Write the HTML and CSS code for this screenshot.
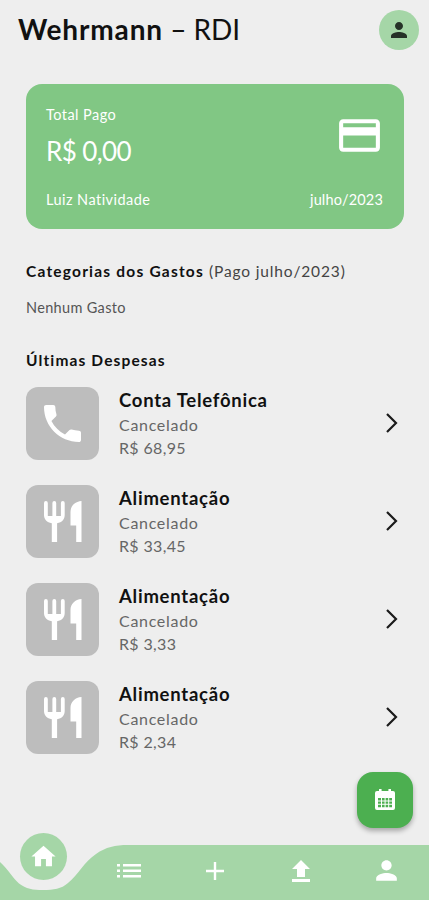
FILE: index.html
```
<!DOCTYPE html>
<html lang="pt-BR">
<head>
    <meta charset="UTF-8">
    <meta name="viewport" content="width=device-width, initial-scale=1.0">
    <title>Wehrmann - RDI</title>
    <link rel="stylesheet" href="styles.css">
</head>
<body>
    <svg width="0" height="0" class="sprite">
        <symbol id="person" viewBox="0 0 24 24"><path d="M12 12c2.21 0 4-1.79 4-4s-1.79-4-4-4-4 1.79-4 4 1.79 4 4 4zm0 2c-2.67 0-8 1.34-8 4v2h16v-2c0-2.66-5.33-4-8-4z"/></symbol>
        <symbol id="food" viewBox="0 0 38 42"><path d="M0 2a1.900 1.900 0 0 1 3.800 0v13h4.600V2a1.900 1.900 0 0 1 3.800 0v13h4.700V2a1.900 1.900 0 0 1 3.800 0v12c0 4.500-2.700 7.300-7.600 8.200V41H7.800V22.200C2.900 21.300 0 18.500 0 14z"/><path d="M37.500 0v41h-5.300V24.500h-5.700V11C26.500 5 31 .5 37.500 0z"/></symbol>
        <symbol id="chevron" viewBox="0 0 14 22"><path d="M2 2l9 9-9 9" fill="none" stroke="#1b1b1b" stroke-width="2.200"/></symbol>
    </svg>

    <div class="app">
        <header class="header">
            <h1><b>Wehrmann</b> <span>– RDI</span></h1>
            <div class="avatar"><svg width="24" height="24"><use href="#person"/></svg></div>
        </header>

        <main class="content">
            <section class="card">
                <div class="card-top">
                    <div>
                        <p class="card-label">Total Pago</p>
                        <p class="card-value">R$ 0,00</p>
                    </div>
                    <svg class="card-icon" viewBox="0 0 24 24"><path d="M20 4H4c-1.110 0-1.990.89-1.990 2L2 18c0 1.110.89 2 2 2h16c1.110 0 2-.89 2-2V6c0-1.110-.89-2-2-2zm0 14H4v-6h16v6zm0-10H4V6h16v2z"/></svg>
                </div>
                <div class="card-bottom">
                    <span class="owner">Luiz Natividade</span>
                    <span class="month">julho/2023</span>
                </div>
            </section>

            <h2 class="categories"><b>Categorias dos Gastos</b> <span>(Pago julho/2023)</span></h2>
            <p class="empty">Nenhum Gasto</p>

            <h2 class="latest">Últimas Despesas</h2>
            <ul class="expenses">
                <li class="expense">
                    <div class="thumb"><svg class="phone" viewBox="3 3 18 18"><path d="M6.620 10.790c1.440 2.830 3.760 5.140 6.590 6.590l2.200-2.200c.27-.27.67-.36 1.020-.24 1.120.37 2.330.57 3.570.57.55 0 1 .45 1 1V20c0 .55-.45 1-1 1C10.610 21 3 13.390 3 4c0-.55.45-1 1-1h3.500c.55 0 1 .45 1 1 0 1.250.2 2.450.57 3.570.11.35.03.74-.25 1.020l-2.200 2.200z"/></svg></div>
                    <div class="info">
                        <h3>Conta Telefônica</h3>
                        <p class="status">Cancelado</p>
                        <p>R$ 68,95</p>
                    </div>
                    <svg class="chevron"><use href="#chevron"/></svg>
                </li>
                <li class="expense">
                    <div class="thumb"><svg class="food"><use href="#food"/></svg></div>
                    <div class="info">
                        <h3>Alimentação</h3>
                        <p class="status">Cancelado</p>
                        <p>R$ 33,45</p>
                    </div>
                    <svg class="chevron"><use href="#chevron"/></svg>
                </li>
                <li class="expense">
                    <div class="thumb"><svg class="food"><use href="#food"/></svg></div>
                    <div class="info">
                        <h3>Alimentação</h3>
                        <p class="status">Cancelado</p>
                        <p>R$ 3,33</p>
                    </div>
                    <svg class="chevron"><use href="#chevron"/></svg>
                </li>
                <li class="expense">
                    <div class="thumb"><svg class="food"><use href="#food"/></svg></div>
                    <div class="info">
                        <h3>Alimentação</h3>
                        <p class="status">Cancelado</p>
                        <p>R$ 2,34</p>
                    </div>
                    <svg class="chevron"><use href="#chevron"/></svg>
                </li>
            </ul>
        </main>

        <button class="fab" aria-label="Calendário">
            <svg width="20" height="22" viewBox="0 0 20 22"><path fill-rule="evenodd" d="M2 2h2V.8a1.300 1.300 0 0 1 2.600 0V2h6.800V.8a1.300 1.300 0 0 1 2.600 0V2h2a2 2 0 0 1 2 2v15a2 2 0 0 1-2 2H2a2 2 0 0 1-2-2V4a2 2 0 0 1 2-2zM3 9v2.400h3V9zm4 0v2.400h2.600V9zm3.600 0v2.400h2.600V9zm3.600 0v2.400H17V9zM3 12.400v2.400h3v-2.400zm4 0v2.400h2.600v-2.400zm3.600 0v2.400h2.600v-2.400zm3.600 0v2.400H17v-2.400zM3 15.800v2.400h3v-2.400zm4 0v2.400h2.600v-2.400zm3.600 0v2.400h2.600v-2.400zm3.600 0v2.400H17v-2.400z"/></svg>
        </button>

        <nav class="nav">
            <svg class="nav-bg" viewBox="0 0 429 55"><path d="M0 17C8 24 12 32 19 38.500C26 44 33 45 43 45C54 45 61 44 68 38C78 30 84 17 96 9C106 2 115 0 128 0H429V55H0z"/></svg>
            <a class="home"><svg width="29" height="29" viewBox="0 0 24 24"><path d="M10 20v-6h4v6h5v-8h3L12 3 2 12h3v8z"/></svg></a>
            <a></a>
            <a><svg width="24" height="16" viewBox="0 0 24 16"><path d="M0 1h3v2.600H0zM6 1h18v2.600H6zM0 6.500h3v2.600H0zM6 6.500h18v2.600H6zM0 12h3v2.600H0zM6 12h18v2.600H6z"/></svg></a>
            <a><svg width="18" height="18" viewBox="0 0 18 18"><path d="M7.800 0h2.400v7.800H18v2.400h-7.800V18H7.800v-7.800H0V7.800h7.800z"/></svg></a>
            <a><svg width="18" height="22" viewBox="0 0 18 22"><path d="M9 0l9 9h-5v8H5V9H0zM0 19h18v3H0z"/></svg></a>
            <a><svg width="31" height="31"><use href="#person"/></svg></a>
        </nav>
    </div>
</body>
</html>
```
FILE: styles.css
```
* {
    box-sizing: border-box;
    margin: 0;
    padding: 0;
}
body {
    font-family: Lato, sans-serif;
    background-color: #eeeeee;
    color: #111;
}
svg {
    display: block;
    fill: white;
}
.sprite {
    position: absolute;
}
.app {
    position: relative;
    display: flex;
    flex-direction: column;
    height: 900px;
    overflow: hidden;
}
.header {
    display: flex;
    justify-content: space-between;
    align-items: center;
    height: 60px;
    padding: 0 10px 0 18px;
}
h1 {
    font-size: 28px;
    font-weight: 400;
    line-height: 34px;
    margin-top: -2px;
    white-space: nowrap;
}
h1 b {
    letter-spacing: 0.85px;
}
.avatar {
    display: grid;
    place-items: center;
    width: 40px;
    height: 40px;
    border-radius: 50%;
    background-color: #a5d6a7;
}
.avatar svg {
    fill: #263228;
}
.content {
    flex: 1;
    padding: 24px 25px 0 26px;
}
.card {
    display: flex;
    flex-direction: column;
    justify-content: space-between;
    height: 145px;
    padding: 21px 21px 19px 20px;
    border-radius: 16px;
    background-color: #81c784;
    color: white;
}
.card-top, .card-bottom {
    display: flex;
    justify-content: space-between;
}
.card-label, .card-bottom {
    font-size: 14.5px;
    line-height: 20px;
}
.card-label, .owner {
    letter-spacing: 0.45px;
}
.month {
    letter-spacing: 0.15px;
}
.card-value {
    margin-top: 9px;
    font-size: 26px;
    line-height: 34px;
    letter-spacing: -0.6px;
}
.card-icon {
    width: 49px;
    height: 49px;
    margin: 6px -1px 0 0;
}
h2 {
    font-size: 15.5px;
    line-height: 20px;
    letter-spacing: 1.12px;
    white-space: nowrap;
}
.categories {
    margin-top: 32px;
    font-weight: 400;
}
.categories b {
    letter-spacing: 1.2px;
}
.categories span {
    letter-spacing: 0.85px;
    color: #444;
}
.empty {
    margin-top: 17px;
    font-size: 14.5px;
    line-height: 20px;
    letter-spacing: 0.33px;
    color: #555;
}
.latest {
    margin-top: 32px;
}
.expenses {
    display: flex;
    flex-direction: column;
    gap: 25px;
    margin-top: 17px;
    list-style: none;
}
.expense {
    display: flex;
    align-items: center;
    height: 73px;
}
.thumb {
    display: grid;
    place-items: center;
    width: 73px;
    height: 73px;
    border-radius: 12px;
    background-color: #bdbdbd;
}
.phone {
    width: 37px;
    height: 37px;
}
.food {
    width: 38px;
    height: 42px;
}
.info {
    flex: 1;
    margin: -2px 0 0 20px;
    font-size: 16px;
    line-height: 23px;
    letter-spacing: 0.35px;
    color: #666;
}
.status {
    letter-spacing: 0.7px;
}
h3 {
    font-size: 18.5px;
    line-height: 26px;
    letter-spacing: 0.75px;
    color: #111;
}
.chevron {
    width: 14px;
    height: 22px;
    margin: -2px 5px 0 0;
}
.fab {
    position: absolute;
    right: 16px;
    bottom: 72px;
    display: grid;
    place-items: center;
    width: 56px;
    height: 56px;
    border: none;
    border-radius: 16px;
    background-color: #4caf50;
    box-shadow: 0 3px 5px rgba(0,0,0,0.3);
}
.nav {
    position: relative;
    display: grid;
    grid-template-columns: repeat(5, 1fr);
    height: 55px;
}
.nav a {
    position: relative;
    display: grid;
    place-items: center;
    padding-left: 1px;
    height: 51px;
}
.nav-bg {
    position: absolute;
    width: 100%;
    height: 55px;
    fill: #a5d6a7;
}
.nav .home {
    position: absolute;
    left: 20px;
    top: -12px;
    width: 47px;
    height: 47px;
    padding-left: 0;
    border-radius: 50%;
    background-color: #a5d6a7;
}
```
